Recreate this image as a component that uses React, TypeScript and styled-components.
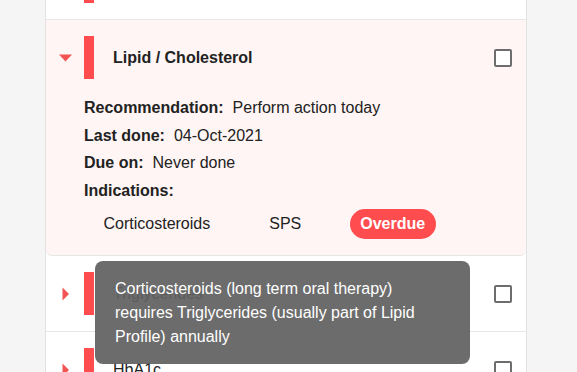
import React from "react";
import styled, { createGlobalStyle } from "styled-components";

const GlobalStyle = createGlobalStyle`
  html, body {
    margin: 0;
    padding: 0;
    background: #f5f5f5;
    font-family: "Liberation Sans", Arial, sans-serif;
    color: #222;
    overflow: hidden;
  }
`;

type Item = {
  name: string;
  open?: boolean;
};

const items: Item[] = [
  { name: "Blood Pressure" },
  { name: "Lipid / Cholesterol", open: true },
  { name: "Triglycerides" },
  { name: "HbA1c" },
];

export default function App() {
  return (
    <>
      <GlobalStyle />
      <Page>
        <Panel>
          {items.map((item) => (
            <Row key={item.name} $open={item.open}>
              <Header>
                <Caret>
                  {item.open ? (
                    <svg width="13" height="8" viewBox="0 0 13 8">
                      <path d="M0 0.5h13L6.5 7.5z" fill="#f25454" />
                    </svg>
                  ) : (
                    <svg width="7" height="14" viewBox="0 0 7 14">
                      <path d="M0.5 0.5v13L7 7z" fill="#f25454" />
                    </svg>
                  )}
                </Caret>
                <Bar />
                <Title $bold={item.open}>{item.name}</Title>
                <Check />
              </Header>
              {item.open && (
                <Body>
                  <Field>
                    <Label>Recommendation:</Label>
                    <span>Perform action today</span>
                  </Field>
                  <Field>
                    <Label>Last done:</Label>
                    <span>04-Oct-2021</span>
                  </Field>
                  <Field>
                    <Label>Due on:</Label>
                    <span>Never done</span>
                  </Field>
                  <Field>
                    <Label>Indications:</Label>
                  </Field>
                  <Chips>
                    <Chip>Corticosteroids</Chip>
                    <Chip>SPS</Chip>
                    <Chip $alert>Overdue</Chip>
                  </Chips>
                </Body>
              )}
            </Row>
          ))}
          <Tooltip>
            Corticosteroids (long term oral therapy) requires Triglycerides
            (usually part of Lipid Profile) annually
          </Tooltip>
        </Panel>
      </Page>
    </>
  );
}

const Page = styled.div`
  height: 372px;
  overflow: hidden;
`;

const Panel = styled.div`
  position: relative;
  margin: -56px 0 0 45px;
  width: 482px;
  box-sizing: border-box;
  background: #fff;
  border-left: 1px solid #e2e2e2;
  border-right: 1px solid #e2e2e2;
`;

const Row = styled.div<{ $open?: boolean }>`
  border-bottom: 1px solid #e6e6e6;
  background: ${(p) => (p.$open ? "#fff5f4" : "#fff")};
  border-radius: ${(p) => (p.$open ? "0 0 6px 6px" : "0")};
  padding-bottom: ${(p) => (p.$open ? "16px" : "0")};
`;

const Header = styled.div`
  display: flex;
  align-items: center;
  padding: 16px 14px 16px 0;
`;

const Caret = styled.div`
  width: 38px;
  display: flex;
  justify-content: center;
  align-items: center;
`;

const Bar = styled.div`
  width: 10px;
  height: 43px;
  background: #ff4c4f;
`;

const Title = styled.div<{ $bold?: boolean }>`
  flex: 1;
  margin-left: 19px;
  font-size: 16px;
  font-weight: ${(p) => (p.$bold ? 700 : 400)};
  color: #222;
`;

const Check = styled.div`
  width: 18px;
  height: 18px;
  box-sizing: border-box;
  border: 2px solid #6d6d6d;
  border-radius: 2px;
  background: #fff;
`;

const Body = styled.div`
  padding: 1px 0 0 38px;
  display: flex;
  flex-direction: column;
  gap: 3.5px;
  font-size: 16px;
  line-height: 24px;
  color: #222;
`;

const Field = styled.div`
  display: flex;
  gap: 9px;
`;

const Label = styled.span`
  font-weight: 700;
`;

const Chips = styled.div`
  display: flex;
  align-items: center;
  gap: 38px;
  padding-left: 9px;
  margin-top: 3px;
`;

const Chip = styled.span<{ $alert?: boolean }>`
  height: 30px;
  line-height: 30px;
  padding: 0 10.5px;
  border-radius: 15px;
  font-size: 16px;
  font-weight: ${(p) => (p.$alert ? 700 : 400)};
  color: ${(p) => (p.$alert ? "#fff" : "#222")};
  background: ${(p) => (p.$alert ? "#ff4c4f" : "transparent")};
`;

const Tooltip = styled.div`
  position: absolute;
  left: 49px;
  top: 317px;
  width: 375px;
  box-sizing: border-box;
  padding: 16px 20px 15px;
  border-radius: 8px;
  background: rgba(97, 97, 97, 0.93);
  color: #fff;
  font-size: 16px;
  line-height: 24px;
`;
